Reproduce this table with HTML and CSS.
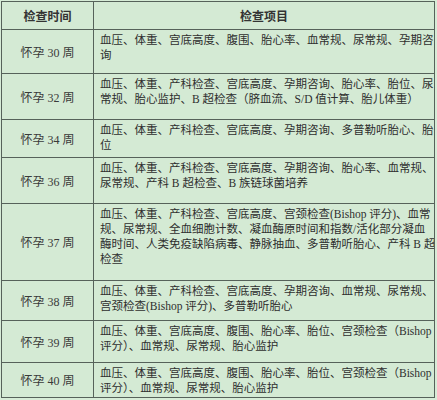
FILE: index.html
```html
<!DOCTYPE html>
<html lang="zh-CN">
<head>
<meta charset="utf-8">
<title>孕晚期检查项目</title>
<link rel="stylesheet" href="styles.css">
</head>
<body>
<table class="exam">
  <colgroup><col class="c-time"><col class="c-item"></colgroup>
  <thead>
    <tr class="h-head"><th>检查时间</th><th>检查项目</th></tr>
  </thead>
  <tbody>
    <tr class="h30"><td class="wk">怀孕 30 周</td><td class="it">血压、体重、宫底高度、腹围、胎心率、血常规、尿常规、孕期咨<br>询</td></tr>
    <tr class="h32"><td class="wk">怀孕 32 周</td><td class="it">血压、体重、产科检查、宫底高度、孕期咨询、胎心率、胎位、尿<br>常规、胎心监护、B 超检查（脐血流、S/D 值计算、胎儿体重）</td></tr>
    <tr class="h34"><td class="wk">怀孕 34 周</td><td class="it">血压、体重、产科检查、宫底高度、孕期咨询、多普勒听胎心、胎<br>位</td></tr>
    <tr class="h36"><td class="wk">怀孕 36 周</td><td class="it">血压、体重、产科检查、宫底高度、孕期咨询、胎心率、血常规、<br>尿常规、产科 B 超检查、B 族链球菌培养</td></tr>
    <tr class="h37"><td class="wk">怀孕 37 周</td><td class="it">血压、体重、产科检查、宫底高度、宫颈检查(Bishop 评分)、血常<br>规、尿常规、全血细胞计数、凝血酶原时间和指数/活化部分凝血<br>酶时间、人类免疫缺陷病毒、静脉抽血、多普勒听胎心、产科 B 超<br>检查</td></tr>
    <tr class="h38"><td class="wk">怀孕 38 周</td><td class="it">血压、体重、产科检查、宫底高度、孕期咨询、血常规、尿常规、<br>宫颈检查(Bishop 评分)、多普勒听胎心</td></tr>
    <tr class="h39"><td class="wk">怀孕 39 周</td><td class="it">血压、体重、宫底高度、腹围、胎心率、胎位、宫颈检查（Bishop<br>评分）、血常规、尿常规、胎心监护</td></tr>
    <tr class="h40"><td class="wk">怀孕 40 周</td><td class="it">血压、体重、宫底高度、腹围、胎心率、胎位、宫颈检查（Bishop<br>评分）、血常规、尿常规、胎心监护</td></tr>
  </tbody>
</table>
</body>
</html>
```
FILE: styles.css
```css
html, body {
  margin: 0;
  padding: 0;
  background: #d7ecd7;
}

body {
  padding: 1px 0 0 1px;
  font-family: "Liberation Serif", "Noto Sans CJK SC", serif;
  color: #2e2e2e;
}

.exam {
  border-collapse: collapse;
  width: 434px;
  table-layout: fixed;
  background: #d4ead4;
}

.c-time { width: 92px; }

.exam th,
.exam td {
  border: 1px solid #56625a;
  padding: 0;
}

.exam th {
  font-family: "Noto Sans CJK SC", sans-serif;
  font-size: 12px;
  font-weight: bold;
  text-align: center;
  vertical-align: middle;
  color: #333;
}

.wk {
  font-size: 12px;
  text-align: center;
  vertical-align: middle;
  white-space: nowrap;
  color: #3a3a3a;
}

.it {
  font-size: 11.5px;
  line-height: 15px;
  vertical-align: top;
  white-space: nowrap;
  overflow: hidden;
  padding: 3px 0 0 6px !important;
}

.h-head { height: 28px; }
.h30 { height: 44px; }
.h32 { height: 46px; }
.h34 { height: 38px; }
.h36 { height: 46px; }
.h37 { height: 77px; }
.h38 { height: 40px; }
.h39 { height: 42px; }
.h40 { height: 35px; }
```
